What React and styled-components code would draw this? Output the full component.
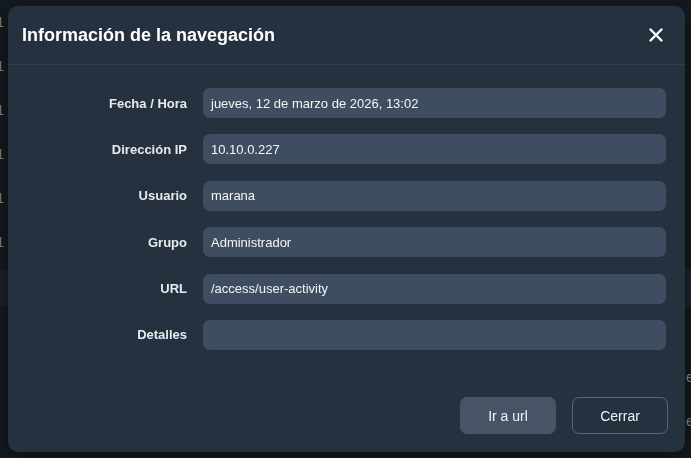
import React from 'react'
import styled, { createGlobalStyle } from 'styled-components'

const GlobalStyle = createGlobalStyle`
  html, body {
    margin: 0;
    padding: 0;
    background: #151a21;
    font-family: "Liberation Sans", Arial, sans-serif;
    overflow: hidden;
  }
`

// page behind the modal
const Page = styled.div`
  width: 691px;
  height: 458px;
  display: flex;
  flex-direction: column;
`

const PageRow = styled.div`
  height: ${p => p.$h || 44}px;
  flex-shrink: 0;
  display: flex;
  align-items: center;
  justify-content: space-between;
  background: ${p => (p.$shaded ? '#1c232c' : 'transparent')};
  color: #8c8a82;
  font-size: 14px;
`

const ClipCell = styled.span`
  width: ${p => p.$w}px;
  overflow: hidden;
  white-space: nowrap;
  direction: ${p => (p.$left ? 'ltr' : 'rtl')};
`

const Overlay = styled.div`
  position: fixed;
  inset: 0;
  display: flex;
  padding: 6px 6px 6px 8px;
  box-sizing: border-box;
`

const Dialog = styled.div`
  flex: 1;
  display: flex;
  flex-direction: column;
  background: #263140;
  border-radius: 10px;
  color: #f1f3f5;
  box-shadow: 0 6px 24px rgba(0, 0, 0, 0.45);
`

const Header = styled.div`
  height: 58px;
  display: flex;
  align-items: center;
  justify-content: space-between;
  padding: 0 20px 0 14px;
  border-bottom: 1px solid #313d4c;
`

const Title = styled.h2`
  margin: 0;
  font-size: 18px;
  font-weight: bold;
  color: #ffffff;
`

const CloseButton = styled.button`
  background: none;
  border: none;
  padding: 0;
  width: 18px;
  height: 18px;
  display: flex;
  align-items: center;
  justify-content: center;
  color: #ffffff;
  cursor: pointer;
`

const Form = styled.div`
  display: grid;
  grid-template-columns: 165px 1fr;
  column-gap: 16px;
  row-gap: 16.4px;
  padding: 23px 19px 0 14px;
  align-items: center;
`

const Label = styled.label`
  text-align: right;
  font-size: 13px;
  font-weight: bold;
  color: #e8eaed;
`

const Field = styled.div`
  height: 30px;
  display: flex;
  align-items: center;
  padding: 0 8px;
  background: #3e4d5f;
  border-radius: 7px;
  font-size: 13px;
  color: #f4f5f7;
  white-space: nowrap;
  overflow: hidden;
`

const Footer = styled.div`
  margin-top: auto;
  display: flex;
  justify-content: flex-end;
  gap: 16px;
  padding: 0 17px 18px 0;
`

const Button = styled.button`
  width: 96px;
  height: 37px;
  border-radius: 7px;
  font-family: inherit;
  font-size: 14px;
  color: #f1f3f5;
  cursor: pointer;
  background: ${p => (p.$outline ? 'transparent' : '#465466')};
  border: 1px solid ${p => (p.$outline ? '#5b6777' : '#465466')};
`

const fields = [
  ['Fecha / Hora', 'jueves, 12 de marzo de 2026, 13:02'],
  ['Dirección IP', '10.10.0.227'],
  ['Usuario', 'marana'],
  ['Grupo', 'Administrador'],
  ['URL', '/access/user-activity'],
  ['Detalles', ''],
]

export default function App() {
  return (
    <>
      <GlobalStyle />
      <Page>
        {[0, 1, 2, 3, 4, 5].map(i => (
          <PageRow key={i}>
            <ClipCell $w={4}>2026-03-11</ClipCell>
          </PageRow>
        ))}
        <PageRow $h={6} />
        <PageRow $h={36} $shaded />
        <PageRow $h={49} />
        <PageRow>
          <span />
          <ClipCell $w={5} $left>estado</ClipCell>
        </PageRow>
        <PageRow>
          <span />
          <ClipCell $w={5} $left>estado</ClipCell>
        </PageRow>
      </Page>

      <Overlay>
        <Dialog>
          <Header>
            <Title>Información de la navegación</Title>
            <CloseButton aria-label="Cerrar">
              <svg width="16" height="16" viewBox="0 0 16 16">
                <path d="M2.5 2.5 L13.5 13.5 M13.5 2.5 L2.5 13.5" stroke="currentColor" strokeWidth="2.4" strokeLinecap="round" />
              </svg>
            </CloseButton>
          </Header>

          <Form>
            {fields.map(([label, value]) => (
              <React.Fragment key={label}>
                <Label>{label}</Label>
                <Field>{value}</Field>
              </React.Fragment>
            ))}
          </Form>

          <Footer>
            <Button>Ir a url</Button>
            <Button $outline>Cerrar</Button>
          </Footer>
        </Dialog>
      </Overlay>
    </>
  )
}
